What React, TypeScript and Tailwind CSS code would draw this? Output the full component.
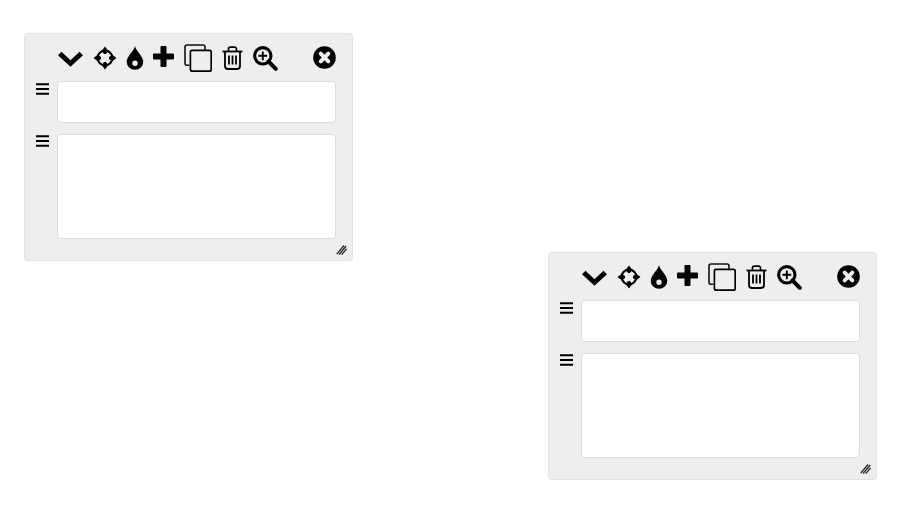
function ChevronIcon() {
  return (
    <svg width="25" height="16" viewBox="0 0 25 16" className="mt-[3px] shrink-0">
      <path d="M0 4.2 L3.5 0.7 L12.5 9.2 L21.5 0.7 L25 4.2 L12.5 15.8 Z" fill="#000" />
    </svg>
  );
}

function TargetIcon() {
  return (
    <svg width="24" height="24" viewBox="0 0 24 24" className="shrink-0">
      <circle cx="12" cy="12" r="7.4" fill="none" stroke="#000" strokeWidth="2.1" />
      <path
        d="M12 0.5 L15.2 4.8 L13 8 H11 L8.8 4.8 Z M12 23.5 L15.2 19.2 L13 16 H11 L8.8 19.2 Z M0.5 12 L4.8 8.8 L8 11 V13 L4.8 15.2 Z M23.5 12 L19.2 8.8 L16 11 V13 L19.2 15.2 Z"
        fill="#000"
      />
    </svg>
  );
}

function DropIcon() {
  return (
    <svg width="18" height="24" viewBox="0 0 18 24" className="shrink-0">
      <path
        fillRule="evenodd"
        d="M9 0.3 C10 5 17.3 10.5 17.3 15.8 A8.3 8 0 0 1 0.7 15.8 C0.7 10.5 8 5 9 0.3 Z M9 14.5 A2.7 2.7 0 1 0 9.01 19.9 A2.7 2.7 0 1 0 9 14.5 Z"
        fill="#000"
      />
    </svg>
  );
}

function PlusIcon() {
  return (
    <svg width="21" height="21" viewBox="0 0 21 21" className="-mt-[2px] shrink-0">
      <path d="M7.5 1 Q7.5 0 8.5 0 H12.5 Q13.5 0 13.5 1 V7.5 H20 Q21 7.5 21 8.5 V12.5 Q21 13.5 20 13.5 H13.5 V20 Q13.5 21 12.5 21 H8.5 Q7.5 21 7.5 20 V13.5 H1 Q0 13.5 0 12.5 V8.5 Q0 7.5 1 7.5 H7.5 Z" fill="#000" />
    </svg>
  );
}

function CopyIcon() {
  return (
    <svg width="28" height="28" viewBox="0 0 28 28" className="shrink-0">
      <path d="M5.5 21.2 H3 A2 2 0 0 1 1 19.2 V3 A2 2 0 0 1 3 1 H19 A2 2 0 0 1 21 3 V5.8" fill="none" stroke="#111" strokeWidth="1.6" />
      <rect x="6.4" y="6.4" width="20.8" height="20.8" rx="1.6" fill="none" stroke="#000" strokeWidth="1.7" />
    </svg>
  );
}

function TrashIcon() {
  return (
    <svg width="21" height="24" viewBox="0 0 21 24" className="shrink-0">
      <path d="M0.5 5.5 H20.5" stroke="#000" strokeWidth="1.8" fill="none" />
      <path d="M6.5 5 V3 A1.8 1.8 0 0 1 8.3 1.2 H12.7 A1.8 1.8 0 0 1 14.5 3 V5" stroke="#000" strokeWidth="1.7" fill="none" />
      <path d="M3 5.5 V20 A3 3 0 0 0 6 23 H15 A3 3 0 0 0 18 20 V5.5" stroke="#000" strokeWidth="1.8" fill="none" />
      <path d="M7 9.5 V18.5 M10.5 9.5 V18.5 M14 9.5 V18.5" stroke="#000" strokeWidth="1.8" fill="none" />
    </svg>
  );
}

function ZoomIcon() {
  return (
    <svg width="25" height="25" viewBox="0 0 25 25" className="mt-[1px] shrink-0">
      <circle cx="9.8" cy="9.8" r="8.2" fill="none" stroke="#000" strokeWidth="3.1" />
      <path d="M15.5 15.5 L22.8 22.8" stroke="#000" strokeWidth="4" strokeLinecap="round" fill="none" />
      <path d="M9.8 5.4 V14.2 M5.4 9.8 H14.2" stroke="#000" strokeWidth="1.9" fill="none" />
    </svg>
  );
}

function CloseIcon() {
  return (
    <svg width="23" height="23" viewBox="0 0 23 23" className="shrink-0">
      <circle cx="11.5" cy="11.5" r="11.3" fill="#000" />
      <path d="M7.7 7.7 L15.3 15.3 M15.3 7.7 L7.7 15.3" stroke="#eee" strokeWidth="4" strokeLinecap="round" fill="none" />
    </svg>
  );
}

function MenuIcon() {
  return (
    <svg width="13" height="12" viewBox="0 0 13 12" className="shrink-0">
      <path d="M0 1.2h13M0 6h13M0 10.8h13" stroke="#000" strokeWidth="2" fill="none" />
    </svg>
  );
}

function ResizeGrip() {
  return (
    <svg width="11" height="11" viewBox="0 0 11 11" className="absolute bottom-[5px] right-[5px]">
      <path d="M0.8 10.2 L8 1.5 M3 10.6 L10.2 2 M5.6 10.6 L10.6 5" stroke="#222" strokeWidth="1.3" fill="none" />
    </svg>
  );
}

function Row({ height, iconPad }: { height: string; iconPad: string }) {
  return (
    <div className="flex items-start">
      <div className={`flex w-[21px] shrink-0 ${iconPad}`}><MenuIcon /></div>
      <div className={`${height} flex-1 rounded-[4px] border border-[#d8dbe0] bg-white`} />
    </div>
  );
}

function Panel({ className }: { className: string }) {
  return (
    <div className={`absolute h-[228px] w-[329px] rounded-[4px] border border-[#e2e2e2] bg-[#eee] ${className}`}>
      <div className="flex h-[47px] items-center pl-[33px] pr-[16px]">
        <ChevronIcon />
        <div className="ml-[10px]"><TargetIcon /></div>
        <div className="ml-[9px]"><DropIcon /></div>
        <div className="ml-[9px]"><PlusIcon /></div>
        <div className="ml-[10px]"><CopyIcon /></div>
        <div className="ml-[10px]"><TrashIcon /></div>
        <div className="ml-[10px]"><ZoomIcon /></div>
        <div className="ml-auto"><CloseIcon /></div>
      </div>
      <div className="flex flex-col gap-[11px] pl-[11px] pr-[16px]">
        <Row height="h-[42px]" iconPad="pt-[2px]" />
        <Row height="h-[105px]" iconPad="pt-[1px]" />
      </div>
      <ResizeGrip />
    </div>
  );
}

export default function App() {
  return (
    <div className="relative h-[509px] w-[900px] overflow-hidden bg-white">
      <Panel className="left-[24px] top-[33px]" />
      <Panel className="left-[548px] top-[252px]" />
    </div>
  );
}
